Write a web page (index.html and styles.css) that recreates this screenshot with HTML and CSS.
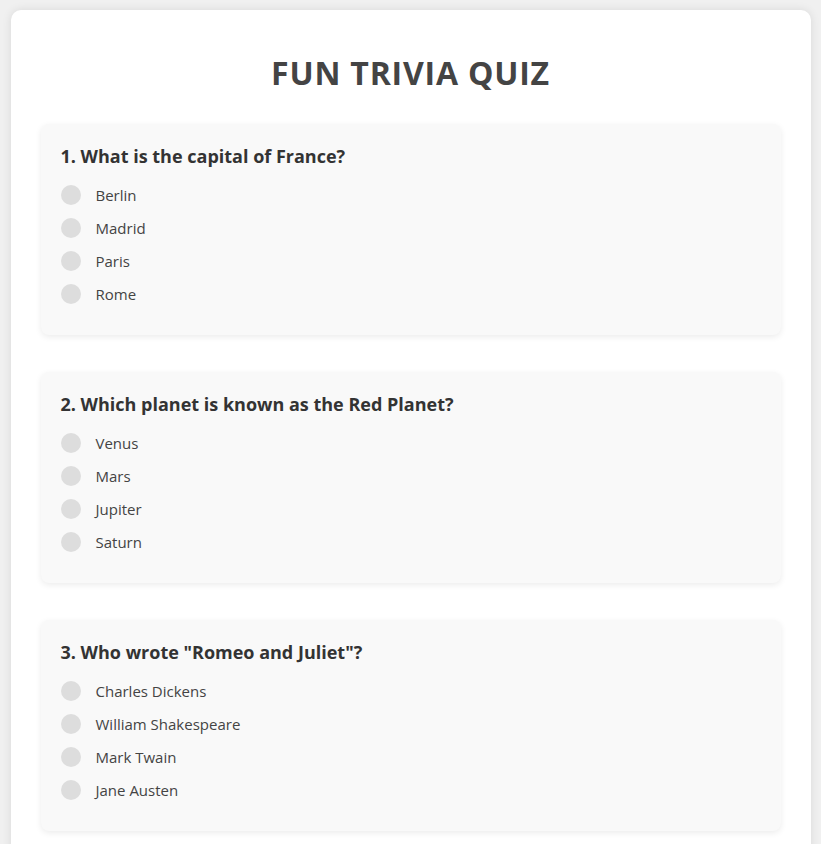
FILE: index.html
```
<!DOCTYPE html>
<html>
<head>
<meta charset="utf-8">
<link rel="stylesheet" href="styles.css">
</head>
<body>
<div class="container">
  <h1 class="title">FUN TRIVIA QUIZ</h1>
  <div class="card">
    <h2 class="question">1. What is the capital of France?</h2>
    <label class="option"><span class="radio"></span>Berlin</label>
    <label class="option"><span class="radio"></span>Madrid</label>
    <label class="option"><span class="radio"></span>Paris</label>
    <label class="option"><span class="radio"></span>Rome</label>
  </div>
  <div class="card">
    <h2 class="question">2. Which planet is known as the Red Planet?</h2>
    <label class="option"><span class="radio"></span>Venus</label>
    <label class="option"><span class="radio"></span>Mars</label>
    <label class="option"><span class="radio"></span>Jupiter</label>
    <label class="option"><span class="radio"></span>Saturn</label>
  </div>
  <div class="card">
    <h2 class="question">3. Who wrote "Romeo and Juliet"?</h2>
    <label class="option"><span class="radio"></span>Charles Dickens</label>
    <label class="option"><span class="radio"></span>William Shakespeare</label>
    <label class="option"><span class="radio"></span>Mark Twain</label>
    <label class="option"><span class="radio"></span>Jane Austen</label>
  </div>
</div>
</body>
</html>
```
FILE: styles.css
```
* { box-sizing: border-box; }
body {
  margin: 0;
  background: #f0f0f0;
  font-family: "Open Sans", "Noto Sans", sans-serif;
}
.container {
  max-width: 800px;
  margin: 10px auto;
  background: #fff;
  border-radius: 10px;
  padding: 30px;
  box-shadow: 0 0 10px rgba(0,0,0,0.1);
}
.title {
  margin: 11px 0 29px;
  text-align: center;
  font-size: 32px;
  line-height: 44px;
  font-weight: 700;
  color: #444;
  letter-spacing: 0.8px;
}
.card {
  background: #f9f9f9;
  border-radius: 8px;
  padding: 20px 20px 20px;
  margin-bottom: 37px;
  box-shadow: 0 2px 6px rgba(0,0,0,0.08);
}
.question {
  margin: 0 0 15px;
  font-size: 18px;
  line-height: 24px;
  font-weight: 700;
  color: #333;
}
.option {
  display: flex;
  align-items: center;
  height: 23px;
  margin-bottom: 10px;
  font-size: 15px;
  color: #444;
}
.radio {
  width: 20px;
  height: 20px;
  border-radius: 50%;
  background: #ddd;
  margin-right: 15px;
  flex: none;
}
```
